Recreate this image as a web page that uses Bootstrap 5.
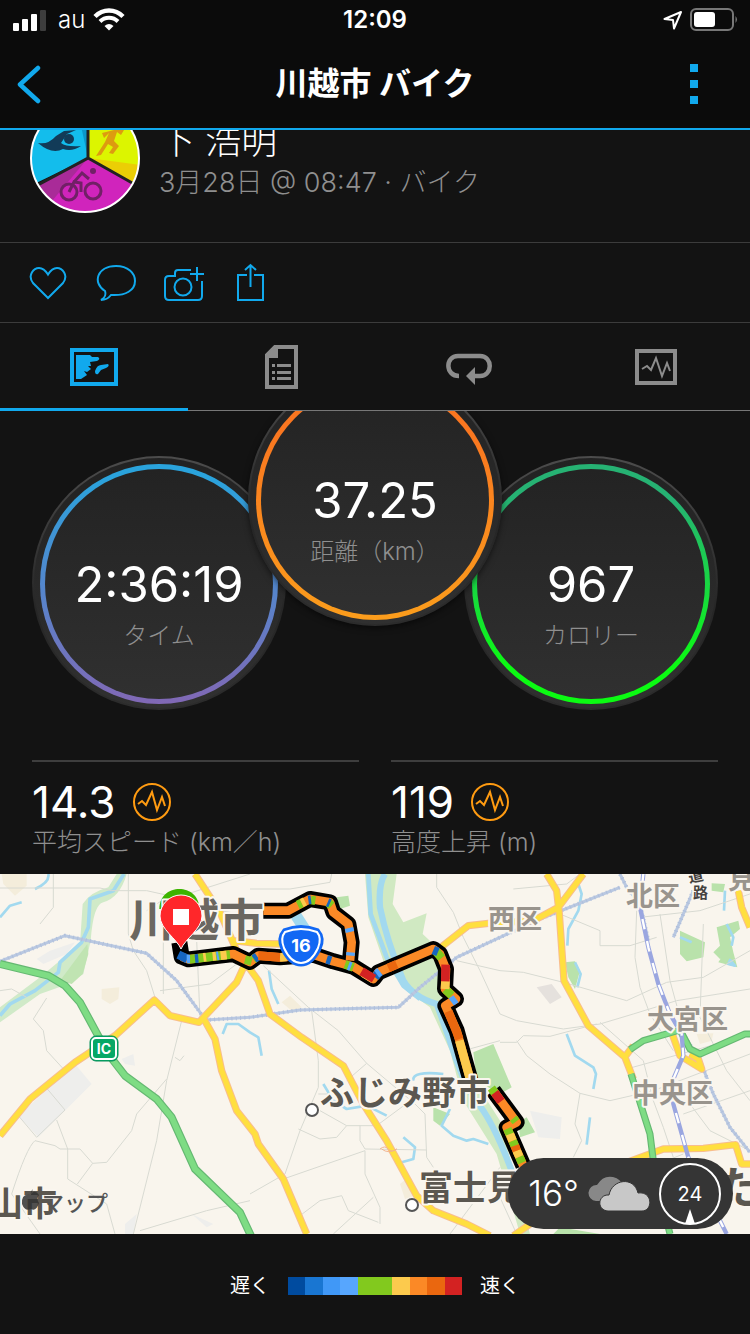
<!DOCTYPE html>
<html lang="ja">
<head>
<meta charset="utf-8">
<meta name="viewport" content="width=device-width, initial-scale=1">
<title>川越市 バイク</title>
<link href="https://cdn.jsdelivr.net/npm/bootstrap@5.3.0/dist/css/bootstrap.min.css" rel="stylesheet">
<style>
  body { background: #131313; color: #fff; font-family: Inter, "Noto Sans CJK JP", sans-serif; overflow-x: hidden; }
  svg { display: block; flex: none; }
  .plain { background: none; border: 0; padding: 0; color: inherit; }
  .accent { color: #11a9ed; }
  .topbar { background: #0b0b0b; border-bottom: 2px solid #11a9ed; }
  .grid3 { display: grid; grid-template-columns: 1fr auto 1fr; align-items: center; }
  .status { height: 40px; padding: 0 12px; font-size: 24px; line-height: 40px; }
  .titlebar { height: 88px; padding: 0 16px; }
  .titlebar h1 { font-size: 32px; line-height: 40px; font-weight: 700; }
  .menu-btn { margin-right: 36px; }
  .athlete { height: 113px; overflow: hidden; padding: 0 30px 29px; gap: 19px; border-bottom: 1px solid #3c3c3c; }
  .athlete-text { padding-bottom: 12px; font-weight: 300; }
  .athlete-name { font-size: 36px; line-height: 48px; }
  .athlete-date { font-size: 27px; line-height: 36px; color: #8f8f8f; }
  .actions { height: 80px; padding: 0 28px; gap: 28px; border-bottom: 1px solid #3c3c3c; }
  .tabs { border-bottom: 1px solid #777; color: #8c8c8c; }
  .tabs button { height: 87px; padding-top: 1px; }
  .tabs .active { color: #11a9ed; box-shadow: inset 0 -2px #11a9ed, 0 1px #11a9ed; }
  .gauges { height: 349px; overflow: hidden; padding-bottom: 50px; }
  .gauge { width: 254px; height: 254px; padding: 6px; border: 2px solid transparent;
    background: linear-gradient(#222, #303030) padding-box, linear-gradient(#4c4c4c, #262626 60%, #2c2c2c) border-box; }
  .gauge-ring { height: 240px; padding-top: 86px; border: 5px solid transparent; background: linear-gradient(#232323, #303030) padding-box, var(--ring) border-box; }
  .gauge-mid { margin: 0 -38px 84px; z-index: 1; box-shadow: 0 2px 6px #0008; }
  .gauge-time { --ring: linear-gradient(#2aa3dc 5%, #5387cd 50%, #8168b5); }
  .gauge-dist { --ring: linear-gradient(#f97620 20%, #fb9d1c); }
  .gauge-cal { --ring: linear-gradient(#26b273 15%, #0bfb12 85%); }
  .big { font-size: 49px; line-height: 60px; }
  .caption { font-size: 24px; line-height: 36px; font-weight: 300; color: #8f8f8f; margin-top: 3px; }
  .stats { padding: 0 32px; gap: 32px; }
  .stat { border-top: 2px solid #3e3e3e; padding: 18px 0 14px; }
  .stat-value { font-size: 44px; line-height: 44px; }
  .stat-label { font-size: 25px; line-height: 36px; font-weight: 300; color: #8f8f8f; }
  .map svg.canvas { width: 100%; height: auto; }
  .canvas text { font-family: "Noto Sans CJK JP", sans-serif; font-weight: 700; paint-order: stroke; stroke: #faf6ef; stroke-width: 4px; stroke-linejoin: round; }
  .canvas .on-shield { stroke: none; font-family: Inter, sans-serif; }
  .canvas .mapkit { font-weight: 500; stroke: none; }
  .weather { right: 17px; bottom: 5px; height: 71px; padding: 0 12px 0 20px; background: #353535; border-radius: 36px; font-size: 35px; font-weight: 300; gap: 9px; }
  .legend-row { height: 100px; padding-top: 3px; gap: 18px; font-size: 20px; }
  .scale { width: 174px; height: 18px; }
</style>
</head>
<body>
<header class="topbar">
  <div class="grid3 status">
    <div class="d-flex align-items-center gap-2">
      <svg width="34" height="22" fill="#fff"><rect x="1" y="14" width="6" height="8" rx="1"/><rect x="10" y="10" width="6" height="12" rx="1"/><rect x="19" y="5" width="6" height="17" rx="1"/><rect x="28" y="1" width="6" height="21" rx="1" fill="#3d3d3d"/></svg>
      <span class="ms-1 fw-light">au</span>
      <svg width="32" height="24" viewBox="0 0 32 24" fill="none" stroke="#fff"><path d="M2 8.500C10 .5 22 .5 30 8.500" stroke-width="4.500"/><path d="M7 13.500C12 8.500 20 8.500 25 13.500" stroke-width="4"/><path d="M11.500 18Q16 14 20.500 18L16 22.500Z" fill="#fff" stroke="none"/></svg>
    </div>
    <span class="fw-semibold">12:09</span>
    <div class="d-flex align-items-center justify-content-end gap-2">
      <svg width="19" height="20" viewBox="0 0 19 20" fill="none" stroke="#fff" stroke-width="2" stroke-linejoin="round"><path d="M1.500 9 18 2 11 18.500 10 10Z"/></svg>
      <svg width="48" height="24" viewBox="0 0 48 24"><rect x="1" y="1" width="42" height="21" rx="5" fill="none" stroke="#777" stroke-width="2"/><rect x="4" y="4" width="21" height="15" rx="3" fill="#fff"/><path d="M45.500 8q3 3.500 0 7Z" fill="#777"/></svg>
    </div>
  </div>
  <div class="grid3 titlebar">
    <a href="#" class="accent" aria-label="戻る"><svg width="26" height="40" fill="none" stroke="currentColor" stroke-width="4.500" stroke-linecap="round" stroke-linejoin="round"><path d="M22 4 4 20.500 22 37"/></svg></a>
    <h1 class="m-0">川越市 バイク</h1>
    <button class="plain accent ms-auto menu-btn" aria-label="メニュー"><svg width="8" height="40" fill="currentColor"><path d="M0 0h8v8H0zM0 16h8v8H0zM0 32h8v8H0z"/></svg></button>
  </div>
</header>

<main>
  <section class="athlete d-flex align-items-end">
    <svg width="110" height="110" viewBox="0 0 110 110">
      <clipPath id="face"><circle cx="55" cy="55" r="54"/></clipPath>
      <g clip-path="url(#face)">
        <path d="M58 55V0H0V83Z" fill="#13bdec"/><path d="M58 0V55L46 0Z" fill="#0b98ca"/>
        <path d="M58 55V0H110V85Z" fill="#dcf500"/><path d="M58 55 110 62V86Z" fill="#ebce05"/>
        <path d="M58 55 0 87V110H110V83Z" fill="#d024bc"/><path d="M58 55 6 83 22 98Z" fill="#a92b98"/>
        <path d="M58 0V55L6 83M58 55 104 81" fill="none" stroke="#222" stroke-width="3"/>
        <path d="M8 40Q18 42 26 33L34 28 46 27 37 31 31 40Q36 44 51 43 42 49 33 46 22 52 8 40Z" fill="#123b58"/><circle cx="39" cy="36" r="5" fill="#123b58"/>
        <path d="M72 30 84 27 94 27 91 32 87 29 84 38 89 43 83 51 79 50 83 44 78 41 71 52 66 53 75 39 79 30 74 35Z" fill="#dd9b10"/>
        <g fill="none" stroke="#712066" stroke-width="3"><circle cx="39" cy="89" r="8"/><circle cx="63" cy="88" r="8"/><path d="M39 89 44 79 51 80 51 89M44 79 52 70 59 76" stroke-width="3"/></g><circle cx="63" cy="68" r="3" fill="#712066"/>
      </g>
      <circle cx="55" cy="55" r="54" fill="none" stroke="#fff" stroke-width="2"/>
    </svg>
    <div class="athlete-text">
      <div class="athlete-name">下 浩明</div>
      <div class="athlete-date">3月28日 @ 08:47 · バイク</div>
    </div>
  </section>

  <div class="actions d-flex align-items-center">
    <button class="plain accent" aria-label="いいね"><svg width="40" height="40" fill="none" stroke="currentColor" stroke-width="2"><path d="M20 35 5 20C-1 12 6 5 11 5Q16 5 20 11.500 24 5 29 5C34 5 41 12 35 20Z"/></svg></button>
    <button class="plain accent" aria-label="コメント"><svg width="40" height="40" fill="none" stroke="currentColor" stroke-width="2"><path d="M9 28C-4 20 1 3 20 3 32 3 39 10 39 18 39 27 30 33 15 32 12 36 9 37 5 37 9 35 10 31 9 28Z"/></svg></button>
    <button class="plain accent" aria-label="写真を追加"><svg width="40" height="40" fill="none" stroke="currentColor" stroke-width="2"><path d="M27 7H14Q11 7 11 10V13H5Q1 13 1 17V33Q1 37 5 37H34Q38 37 38 33V18M26 11H40M33 4V18"/><circle cx="19" cy="24" r="8.500"/></svg></button>
    <button class="plain accent" aria-label="共有"><svg width="40" height="40" fill="none" stroke="currentColor" stroke-width="2"><path d="M15 12H6V37H31V12H22M18.500 2V24M13 7 18.500 2 24 7"/></svg></button>
  </div>

  <nav class="tabs row g-0" aria-label="アクティビティ">
    <div class="col-3"><button class="plain active w-100 d-flex align-items-center justify-content-center" aria-label="地図"><svg width="48" height="38" fill="currentColor"><rect x="2" y="2" width="44" height="34" fill="none" stroke="currentColor" stroke-width="4"/><path d="M6 7H20L22 9 28 9Q31 11 27 13L20 14 21 18 18 18 21 21 17 24 14 23 17 27 11 31H6ZM38 16Q40 18 36 20L31 22 28 26Q25 27 25 23 27 17 31 17Z"/></svg></button></div>
    <div class="col-3"><button class="plain w-100 d-flex align-items-center justify-content-center" aria-label="詳細"><svg width="34" height="46" fill="currentColor"><path d="M11 3H32V43H3V11Z" fill="none" stroke="currentColor" stroke-width="4"/><path d="M2 10 11 2H14V14H2ZM8 20h3v3H8zM8 27h3v3H8zM8 33h3v3H8zM13 20H27v3H13zM13 27H27v3H13zM13 33H27v3H13z"/></svg></button></div>
    <div class="col-3"><button class="plain w-100 d-flex align-items-center justify-content-center" aria-label="ラップ"><svg width="46" height="38" fill="none" stroke="currentColor"><path d="M13 28C-1 28-1 8 12 8H34C47 8 47 28 34 28H27" stroke-width="4.500"/><path d="M20 28 29 19V37Z" fill="currentColor" stroke="none"/></svg></button></div>
    <div class="col-3"><button class="plain w-100 d-flex align-items-center justify-content-center" aria-label="グラフ"><svg width="42" height="36" fill="none" stroke="currentColor"><rect x="2" y="2" width="38" height="32" stroke-width="4"/><path d="M7 20 12 17 16 21 21 9 27 27 32 14 35 22" stroke-width="2"/></svg></button></div>
  </nav>

  <section class="gauges d-flex align-items-end justify-content-center text-center">
    <div class="gauge rounded-circle flex-shrink-0 gauge-time"><div class="gauge-ring rounded-circle"><div class="big">2:36:19</div><div class="caption">タイム</div></div></div>
    <div class="gauge rounded-circle flex-shrink-0 gauge-mid gauge-dist"><div class="gauge-ring rounded-circle"><div class="big">37.25</div><div class="caption">距離（km）</div></div></div>
    <div class="gauge rounded-circle flex-shrink-0 gauge-cal"><div class="gauge-ring rounded-circle"><div class="big">967</div><div class="caption">カロリー</div></div></div>
  </section>

  <section class="stats d-flex">
    <div class="stat flex-fill w-50">
      <div class="stat-value d-flex align-items-center gap-3">14.3 <svg width="40" height="40" fill="none" stroke="#ff9b11" stroke-width="2"><circle cx="20" cy="20" r="18"/><path d="M6 22 10 19 14 23 20 10 25 28 30 15 33 24"/></svg></div>
      <div class="stat-label">平均スピード (km／h)</div>
    </div>
    <div class="stat flex-fill w-50">
      <div class="stat-value d-flex align-items-center gap-3">119 <svg width="40" height="40" fill="none" stroke="#ff9b11" stroke-width="2"><circle cx="20" cy="20" r="18"/><path d="M6 22 10 19 14 23 20 10 25 28 30 15 33 24"/></svg></div>
      <div class="stat-label">高度上昇 (m)</div>
    </div>
  </section>

  <section class="map position-relative">
    <svg class="canvas" viewBox="0 0 750 360" role="img" aria-label="ルート地図">
      <rect width="750" height="360" fill="#f9f5ed"/>
      <g transform="scale(.33333)" fill="none" stroke-linejoin="round">
        <!-- built-up areas -->
        <path d="M225 570 275 630 115 790 55 725ZM365 555 400 540 405 575 375 570ZM110 255 150 230 225 205 200 240 130 270ZM1590 710 1685 730 1680 795 1615 790ZM375 1050 410 1020 400 1080H375ZM575 1020 640 1050 620 1060Z" fill="#eeeeec"/>
        <path d="M305 345 358 340 355 375 330 390 305 375ZM5 0H80V35L45 65 10 30ZM845 385 870 365 905 400 880 415ZM1200 930 1225 910 1255 960 1215 975ZM2090 480 2140 478 2135 500 2100 510Z" fill="#f4eddb"/>
        <path d="M1610 340 1655 330 1685 370 1650 390Z" fill="#e5e1dd"/>
        <!-- river banks and parks -->
        <path d="M350 0H380Q360 70 310 85 280 90 272 200L250 300 190 335 120 360 0 445V400L120 310 240 210 248 90Q270 55 325 40Z" fill="#d0eac8"/>
        <path d="M262 210 265 240 248 300 215 330 180 320Z" fill="#c0e4b2"/>
        <path d="M1095 0H1190L1178 90 1210 145 1280 118 1268 180 1300 210 1320 300 1345 400 1390 520 1430 630 1500 740 1590 1080H1560L1490 840 1390 680 1350 530 1290 400 1220 350 1150 260 1105 130Z" fill="#d0e9c2"/>
        <path d="M1420 535 1480 510 1535 640 1500 660 1430 620ZM1010 70 1045 65 1050 95 1020 105ZM1300 700 1350 720 1320 755 1300 740ZM1555 745 1580 730 1605 775 1560 790ZM1695 265 1725 262 1740 290 1725 345 1705 310ZM2040 170 2115 205 2110 250 2060 262 2040 240ZM2150 160 2215 140 2220 165 2190 190 2200 235 2160 255 2140 235 2160 215ZM2165 250 2200 235 2212 280 2155 265ZM2135 28 2175 30 2170 55 2135 50ZM1660 1080 1680 1060 1800 1080Z" fill="#b9e2ab"/>
        <!-- water -->
        <g stroke="#a2d9ef" stroke-width="8">
          <path d="M0 425 30 390 105 350 175 295 180 265 245 205 265 160 270 75 340 50 372 0" stroke-width="11"/>
          <path d="M1105 0 1112 120 1160 250 1210 335 1260 375" stroke-width="14"/>
          <path d="M1155 0Q1135 30 1140 100 1160 200 1210 320 1240 370 1310 390 1340 470 1370 560 1400 650 1450 710 1490 770 1535 890" stroke-width="19"/>
          <path d="M0 130 30 95 65 85M105 45Q150 25 145 0M668 480 680 450 715 450 750 475 775 490 785 545M807 290 815 345 835 390M970 630 1000 680 1040 705 1100 695 1160 725M1240 620Q1235 590 1330 600M1350 705 1325 755 1360 785 1400 800 1420 795 1465 810M1210 790 1245 820 1240 855 1205 865M1735 30 1745 60 1735 110 1705 165 1702 215M1725 265 1742 300 1732 340M1700 480 1725 545 1780 580 1788 600 1780 645M1770 730 1760 812M2175 50 2172 110M2180 150 2200 190 2195 215M2040 190 2075 205"/>
          <path d="M885 120 930 190" stroke-width="34"/>
          <path d="M2185 270 2190 258 2205 275Z" fill="#a2d9ef"/>
        </g>
        <!-- minor roads -->
        <g stroke="#d8dad2" stroke-width="3">
          <path d="M0 42H300L335 50H440L530 70 750 0M160 0V100L120 150M385 0V180L400 230 440 290 465 370M440 110 485 80 600 100 720 120M490 200V360M590 200 600 430M480 350 630 330 710 270M140 372 100 435 130 470 140 530 195 590M142 645 195 708 110 790 55 725M545 440 500 620 470 800 400 1080M525 550 540 560 552 545M500 615 410 720 395 770 320 865 278 868 240 825H180L165 815 105 800M170 738 203 825V915L320 990 345 1080M278 868 232 930M105 800Q80 820 35 960L120 1080M420 1070 620 1010 750 980M0 350 35 345 80 370"/>
          <path d="M750 45 870 45 990 25 995 0M790 275 925 400 1015 470 1100 568 1245 690 1275 720 1280 850 1300 880M935 410 955 560 955 640 900 770 855 900 750 960M1100 568 1040 620M955 660H1040M960 710 1040 755H1130L1245 670M895 765 960 795 1010 790 1040 755M1080 755V800L1095 825 1280 828M850 915 1095 830V900L1140 1000 1140 1050M900 1025 960 980 1025 965 1045 1010 1135 1045M1120 970 1000 1080M1310 0V40L1360 115 1390 190 1440 290 1500 420 1550 440 1690 465 1800 450 1900 420 2030 380 2250 345M1370 260 1500 290 1570 295 1690 325 1880 380 2000 325 2110 310 2250 230M1540 45 1700 30 1740 0M1680 120 1800 170V215H1890L1970 190M1910 110 1905 250 1920 340 1950 420 2020 530M1980 120 2010 320 2070 540M1920 130 2100 110 2250 60M2110 150 2100 430 2180 590 2250 680M1500 505H1550L1570 485 1650 487 1790 450M1550 500 1580 545 1650 600 1740 658 1830 680 1960 650 2250 540M1740 658 1725 750 1745 800 1720 850M1800 445 1930 560 1960 680 1990 760 2020 850M1880 585 2150 510M2050 720 2250 650M2070 690 2130 770 2250 830M2050 840 2000 860M1500 970 1550 1080M1350 1080 1500 880M1390 530 1500 500"/>
        </g>
        <!-- railways -->
        <path id="tobu" d="M0 262 195 185 440 238 530 320 617 438 750 430 900 408 1195 400 1260 340 1370 250 1500 190 1620 135 1860 40M1860 0 1880 40 1920 90 1945 200M2080 50 2020 190M2050 480 2100 560 2140 660 2190 760 2250 835" stroke="#b9c8e1" stroke-width="9"/>
        <path d="M0 262 195 185 440 238 530 320 617 438 750 430 900 408 1195 400 1260 340 1370 250 1500 190 1620 135 1860 40M1860 0 1880 40 1920 90 1945 200M2080 50 2020 190M2050 480 2100 560 2140 660 2190 760 2250 835" stroke="#b0bfdb" stroke-width="12" stroke-dasharray="3 10"/>
        <!-- trunk roads: casing, then surface -->
        <g id="trunk-casing" stroke="#f8bd8e" stroke-width="22">
          <path d="M0 785 90 675 225 565 345 485 463 378 510 425 597 445 710 325 740 260M585 0 660 115 710 230 775 320 810 420 905 490 1030 575 1090 690 1160 800 1250 965 1300 1010 1400 1050 1470 1085M610 432 645 495 665 590 710 710 765 780 775 810 850 915 920 1080M700 200 770 208 850 210M1310 230 1405 155 1465 148 1600 140 1675 100 1750 0M1640 0 1670 50 1678 120 1692 320 1765 455 1875 550 1900 615M2015 475 2040 545 2105 585 2095 555 2070 540M1840 880 1990 825 2110 823 2207 812 2225 870H2250M2215 50 2225 100 2250 160M1540 1085 1620 1030M1870 555 1900 515"/>
        </g>
        <path d="M0 785 90 675 225 565 345 485 463 378 510 425 597 445 710 325 740 260M585 0 660 115 710 230 775 320 810 420 905 490 1030 575 1090 690 1160 800 1250 965 1300 1010 1400 1050 1470 1085M610 432 645 495 665 590 710 710 765 780 775 810 850 915 920 1080M700 200 770 208 850 210M1310 230 1405 155 1465 148 1600 140 1675 100 1750 0M1640 0 1670 50 1678 120 1692 320 1765 455 1875 550 1900 615M2015 475 2040 545 2105 585 2095 555 2070 540M1840 880 1990 825 2110 823 2207 812 2225 870H2250M2215 50 2225 100 2250 160M1540 1085 1620 1030M1870 555 1900 515" stroke="#ffdf3f" stroke-width="16"/>
        <path d="M1140 825q15-12 25 0t25 0M1145 825q20 16 45 0" stroke="#f2b48e" stroke-width="3"/>
        <path d="M0 270 145 305 195 335 240 385 297 490 340 560 375 605 470 675 515 730 585 885 720 1015 755 1090" stroke="#65b872" stroke-width="24"/>
        <path d="M0 270 145 305 195 335 240 385 297 490 340 560 375 605 470 675 515 730 585 885 720 1015 755 1090" stroke="#7edc84" stroke-width="17"/>
        <path d="M1890 527 1930 500 2040 468 2070 525 2100 540 2235 480H2250M1893 600 1950 780 1965 900 2010 1080" stroke="#65b872" stroke-width="21"/>
        <path d="M1890 527 1930 500 2040 468 2070 525 2100 540 2235 480H2250M1893 600 1950 780 1965 900 2010 1080" stroke="#7edc84" stroke-width="14"/>
        <path d="M1930 0 1920 100 1945 220 1975 330 2010 420 2045 480 2050 545 2018 620 2020 690 2065 850 2180 1080" stroke="#9aa6e0" stroke-width="13"/>
        <path d="M1930 0 1920 100 1945 220 1975 330 2010 420 2045 480 2050 545 2018 620 2020 690 2065 850 2180 1080" stroke="#fff" stroke-width="7" stroke-dasharray="32 36"/>

        <!-- recorded track: outline, base colour, then pace segments -->
        <g stroke="#000" stroke-width="48" stroke-linecap="butt">
          <path d="M538 205 545 248 565 256 700 240 750 264 775 245 840 250 940 242 1000 262 1060 278 1120 315 1135 295 1300 225 1320 240 1338 285 1335 345 1368 375 1336 395 1370 470 1395 560 1412 620M1480 650 1550 745 1520 760 1570 875"/>
          <path d="M790 110 865 110 930 75 990 85 1000 115 1045 150 1055 205 1050 260"/>
        </g>
        <g stroke="#fb8926" stroke-width="26">
          <path d="M545 248 565 256 700 240 750 264 775 245 840 250 940 242 1000 262 1060 278 1120 315 1135 295 1300 225 1320 240 1338 285 1335 345 1368 375 1336 395 1370 470 1395 560 1412 620M1480 650 1550 745 1520 760 1570 875"/>
          <path d="M790 110 865 110 930 75 990 85 1000 115 1045 150 1055 205 1050 260"/>
          <g stroke="#82c91e"><path d="M565 256 690 242M735 257 755 262M760 256 770 249M893 93 905 87M933 78 946 80M985 86 995 95M1035 271 1060 280M1308 232 1325 252M1336 346 1355 364M1474 642 1490 664M1540 733 1548 743M1522 764 1530 782M1538 800 1545 816M1558 848 1566 866"/></g>
          <g stroke="#fcca4d"><path d="M610 250 618 249M638 247 648 246M662 245 680 243M840 250 860 249M1090 297 1120 315M1337 315 1335 345M1378 500 1410 615M1530 780 1538 800M1550 830 1558 848M905 87 915 82"/></g>
          <g stroke="#1565c0"><path d="M535 242 562 255M585 254 595 253M762 255 772 248M980 256 993 260M925 78 933 77M983 85 990 88M1300 228 1314 234M1125 310 1138 294"/></g>
          <g stroke="#56a5fc"><path d="M560 255 570 255M650 246 656 245M1047 162 1050 174M1052 235 1051 245M1045 275 1053 278M1368 374 1354 384M1130 300 1140 293"/></g>
          <path d="M1085 292 1122 314M1337 272 1336 322M1484 656 1503 682" stroke="#d32222"/>
          <path d="M775 245 840 250M1165 282 1190 271M1345 412 1378 495M1545 815 1550 830" stroke="#ea670f"/>
        </g>
        <path d="M478 105C478 25 598 25 598 105Z" fill="#3db400"/>
      </g>
      <circle cx="312" cy="236" r="6" fill="#fff" stroke="#555" stroke-width="2"/>
      <circle cx="412" cy="331" r="6" fill="#fff" stroke="#555" stroke-width="2"/>
      <g fill="#5b5750" font-size="34">
        <text x="129" y="63" font-size="45" fill="#6b6760">川越市</text>
        <text x="320" y="231">ふじみ野市</text>
        <text x="419" y="326">富士見</text>
        <text x="-11" y="342">山市</text>
        <text x="716" y="330" font-size="44">た</text>
        <g font-size="27" fill="#99948d"><text x="488" y="55">西区</text><text x="626" y="32">北区</text><text x="647" y="155">大宮区</text><text x="632" y="229">中央区</text><text x="728" y="15">見</text></g>
        <text x="42" y="337" font-size="22" class="mapkit" fill="#555">マップ</text>
        <g font-size="15" fill="#45423e"><text x="688" y="8" transform="rotate(-12 694 2)">道</text><text x="693" y="24">路</text></g>
      </g>
      <path d="M31 320q4-5 8 1-3 4 0 8-3 9-8 6-6 3-9-5-1-11 9-9-1-3 2-6" fill="#333" opacity=".85"/>
      <!-- interchange and route 16 shields -->
      <rect x="90" y="162" width="28" height="25" rx="6" fill="#06a866" stroke="#07905a"/><rect x="92" y="164" width="24" height="21" rx="4" fill="none" stroke="#fff" stroke-width="2"/>
      <path d="M284 56Q301 49 318 56 325 64 320 75 312 91 301 91 290 91 282 75 277 64 284 56Z" fill="#1268f4" stroke="#1268f4" stroke-width="3"/>
      <path d="M285 58Q301 52 317 58 322 64 318 74 311 89 301 89 291 89 284 74 280 64 285 58Z" fill="none" stroke="#fff" stroke-width="2"/>
      <g text-anchor="middle" fill="#fff"><text x="104" y="180" font-size="14" class="on-shield">IC</text><text x="301" y="78" font-size="18" class="on-shield">16</text></g>
      <!-- finish pin -->
      <path d="M181 75C177 65 160 55 160 42A21 21 0 0 1 202 42C202 55 185 65 181 75Z" fill="#ff272a" stroke="#fff" stroke-width="1"/>
      <rect x="173" y="35" width="16" height="16" fill="#fff"/>
    </svg>
    <div class="weather position-absolute d-flex align-items-center">
      <span>16°</span>
      <svg width="62" height="36" viewBox="0 0 62 36"><path d="M8 25A8 8 0 0 1 9 9Q15-1 25 1 33 3 35 10L30 25Z" fill="#888"/><path d="M20 35C8 34 10 18 21 19 24 3 46 0 50 17 65 15 65 35 54 35Z" fill="#c8c8c8" stroke="#353535" stroke-width="1"/></svg>
      <svg width="62" height="62" viewBox="0 0 62 62"><circle cx="31" cy="31" r="30" fill="none" stroke="#fff" stroke-width="2"/><path d="M31 46 36 61H26Z" fill="#fff"/><text x="31" y="38" text-anchor="middle" font-size="20" font-weight="400" fill="#fff">24</text></svg>
    </div>
  </section>

  <div class="legend-row d-flex align-items-center justify-content-center">
    <span>遅く</span>
    <svg class="scale" viewBox="0 0 10 1" preserveAspectRatio="none" shape-rendering="crispEdges"><path fill="#004b9f" d="M0 0h1v1H0z"/><path fill="#1976d2" d="M1 0h1v1H1z"/><path fill="#4098f7" d="M2 0h1v1H2z"/><path fill="#57a6fe" d="M3 0h1v1H3z"/><path fill="#82c91e" d="M4 0h2v1H4z"/><path fill="#fcca4d" d="M6 0h1v1H6z"/><path fill="#fb8926" d="M7 0h1v1H7z"/><path fill="#ea670f" d="M8 0h1v1H8z"/><path fill="#d32222" d="M9 0h1v1H9z"/></svg>
    <span>速く</span>
  </div>
</main>
<script src="https://cdn.jsdelivr.net/npm/bootstrap@5.3.0/dist/js/bootstrap.bundle.min.js"></script>
</body>
</html>
